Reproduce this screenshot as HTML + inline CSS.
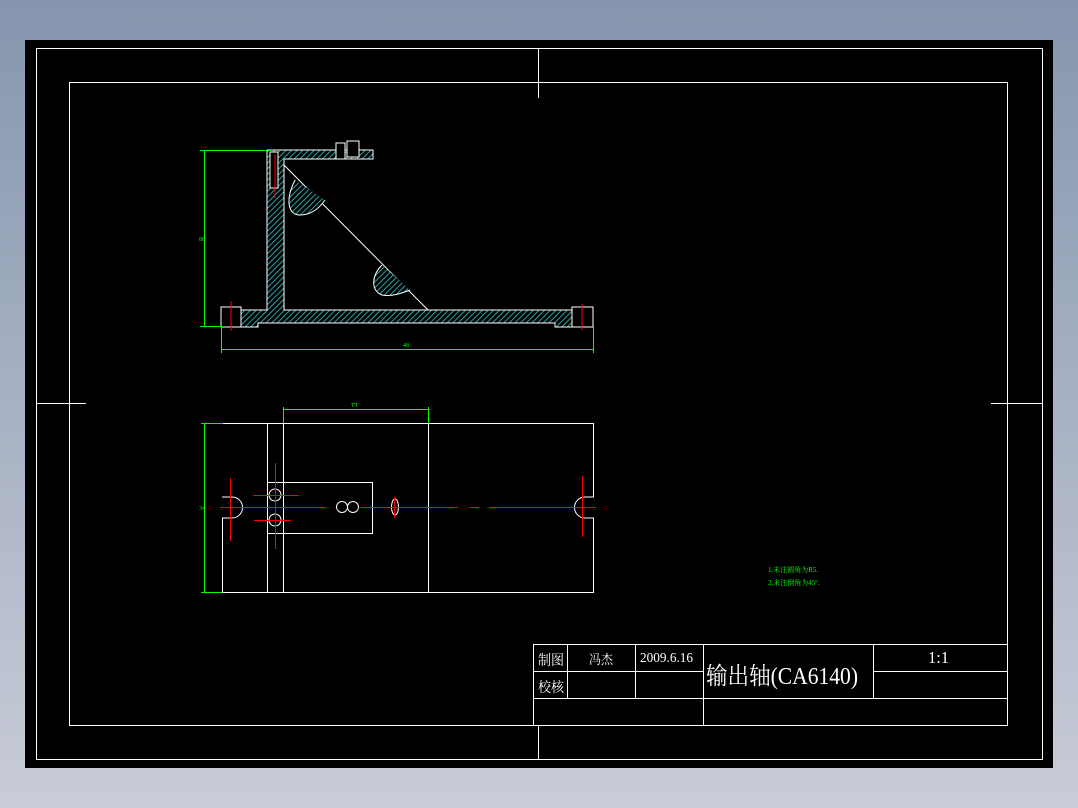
<!DOCTYPE html>
<html><head><meta charset="utf-8"><style>
html,body{margin:0;padding:0;width:1078px;height:808px;overflow:hidden;background:linear-gradient(#8596ae,#c9ccd8);}
svg{position:absolute;left:0;top:0}
text{font-family:"Liberation Serif","Noto Serif CJK SC",serif;fill:#fff}
</style></head><body>
<svg width="1078" height="808" viewBox="0 0 1078 808">
<defs>
<pattern id="h" width="4" height="4" patternUnits="userSpaceOnUse" patternTransform="rotate(45)">
<rect width="4" height="4" fill="#000"/><line x1="0" y1="0" x2="0" y2="4" stroke="#3cc" stroke-width="1.6"/>
</pattern>
</defs>
<rect x="25" y="40" width="1028" height="728" fill="#000"/>
<g fill="none" stroke="#fff" stroke-width="1">
<rect x="36.5" y="48.5" width="1006" height="711"/>
<rect x="69.5" y="82.5" width="938" height="643"/>
<line x1="538.5" y1="48" x2="538.5" y2="98"/><line x1="538.5" y1="726" x2="538.5" y2="760"/>
<line x1="36" y1="403.5" x2="86" y2="403.5"/><line x1="991" y1="403.5" x2="1043" y2="403.5"/>
</g>
<!-- side view -->
<g stroke="#fff" stroke-width="1">
<path d="M267,150 H373 V159 H284 V310 H572 V327 H555 V323 H258 V327 H241 V310 H267 Z" fill="url(#h)"/>
<rect x="221" y="307" width="20" height="20" fill="#000"/>
<rect x="572" y="307" width="21" height="20" fill="#000"/>
<rect x="270" y="152" width="8" height="36" fill="#000"/>
<rect x="336" y="143" width="9" height="16" fill="#000"/>
<rect x="347" y="141" width="12" height="16" fill="#000"/>
<line x1="284" y1="165" x2="428" y2="310"/>
<path d="M295,180 C285,200 288,215 300,215 C310,215 318,210 325,200" fill="url(#h)"/>
<path d="M382,265 C372,275 370,290 382,295 C392,297 402,293 410,290" fill="url(#h)"/>
</g>
<g stroke="red" stroke-width="1"><line x1="231" y1="301" x2="231" y2="331"/><line x1="582" y1="304" x2="582" y2="330"/><line x1="275" y1="155" x2="275" y2="198"/></g>
<g stroke="#0f0" stroke-width="1" fill="none">
<path d="M204.5,150 V326 M200,150.5 H267 M200,326.5 H221"/>
<path d="M221.5,326 V353 M593.5,326 V353 M221,349.5 H593"/>
</g>
<text x="199" y="241" font-size="6" style="fill:#0f0">88</text>
<text x="403" y="347" font-size="6" style="fill:#0f0">48</text>
<!-- plan view -->
<g stroke="#fff" stroke-width="1" fill="none">
<path d="M222.5,423.5 H593.5 V497 H585 M585,518 H593.5 V592.5 H222.5 V518 H230 M230,497 H222.5 Z"/>
<line x1="267.5" y1="423" x2="267.5" y2="592"/><line x1="283.5" y1="423" x2="283.5" y2="592"/><line x1="428.5" y1="423" x2="428.5" y2="592"/>
<rect x="267.5" y="482.5" width="105" height="51"/>
<path d="M222,497 H232 A10,10 0 0 1 232,518 H222"/>
<path d="M593,497 H585 A10,10 0 0 0 585,518 H593"/>
<circle cx="275" cy="495" r="6"/><circle cx="275" cy="520" r="6"/>
<circle cx="342" cy="507" r="5.5"/><circle cx="353" cy="507" r="5.5"/>
<ellipse cx="395" cy="507" rx="3.5" ry="8"/>
</g>
<g stroke="red" stroke-width="1">
<line x1="220" y1="507.5" x2="325" y2="507.5"/><line x1="360" y1="507.5" x2="458" y2="507.5"/><line x1="469" y1="507.5" x2="479" y2="507.5"/><line x1="489" y1="507.5" x2="596" y2="507.5"/>
<line x1="230.5" y1="478" x2="230.5" y2="541"/><line x1="582.5" y1="476" x2="582.5" y2="537"/>
<line x1="275.5" y1="463" x2="275.5" y2="549"/><line x1="253" y1="495.5" x2="299" y2="495.5"/><line x1="254" y1="520.5" x2="291" y2="520.5"/>
<line x1="394.5" y1="497" x2="394.5" y2="518"/>
</g>
<g stroke="#0f0" stroke-width="1" fill="none">
<path d="M204.5,423 V592 M201,423.5 H222 M201,592.5 H222"/>
<path d="M283.5,407 V423 M428.5,407 V423 M283,409.5 H428"/>
</g>
<text x="199" y="510" font-size="6" style="fill:#0f0">34</text>
<text x="351" y="407" font-size="6" style="fill:#0f0">TT</text>
<text x="768" y="572" font-size="7" style="fill:#0f0">1.未注圆角为R5.</text>
<text x="768" y="585" font-size="7" style="fill:#0f0">2.未注倒角为45°.</text>
<!-- title block -->
<g stroke="#fff" stroke-width="1" fill="none">
<rect x="533.5" y="644.5" width="474" height="54"/>
<line x1="533" y1="671.5" x2="703" y2="671.5"/><line x1="873" y1="671.5" x2="1008" y2="671.5"/>
<line x1="567.5" y1="644" x2="567.5" y2="698"/><line x1="635.5" y1="644" x2="635.5" y2="698"/>
<line x1="703.5" y1="644" x2="703.5" y2="726"/><line x1="873.5" y1="644" x2="873.5" y2="698"/>
<line x1="533.5" y1="698" x2="533.5" y2="726"/>
</g>
<text x="538" y="665" font-size="14" textLength="26" lengthAdjust="spacingAndGlyphs">制图</text>
<text x="538" y="692" font-size="14" textLength="26" lengthAdjust="spacingAndGlyphs">校核</text>
<text x="589" y="664" font-size="13" textLength="24" lengthAdjust="spacingAndGlyphs">冯杰</text>
<text x="640" y="662" font-size="14" textLength="53" lengthAdjust="spacingAndGlyphs">2009.6.16</text>
<text x="706" y="684" font-size="24" textLength="152" lengthAdjust="spacingAndGlyphs">输出轴(CA6140)</text>
<text x="928" y="663" font-size="17" textLength="21" lengthAdjust="spacingAndGlyphs">1:1</text>
</svg>
</body></html>
